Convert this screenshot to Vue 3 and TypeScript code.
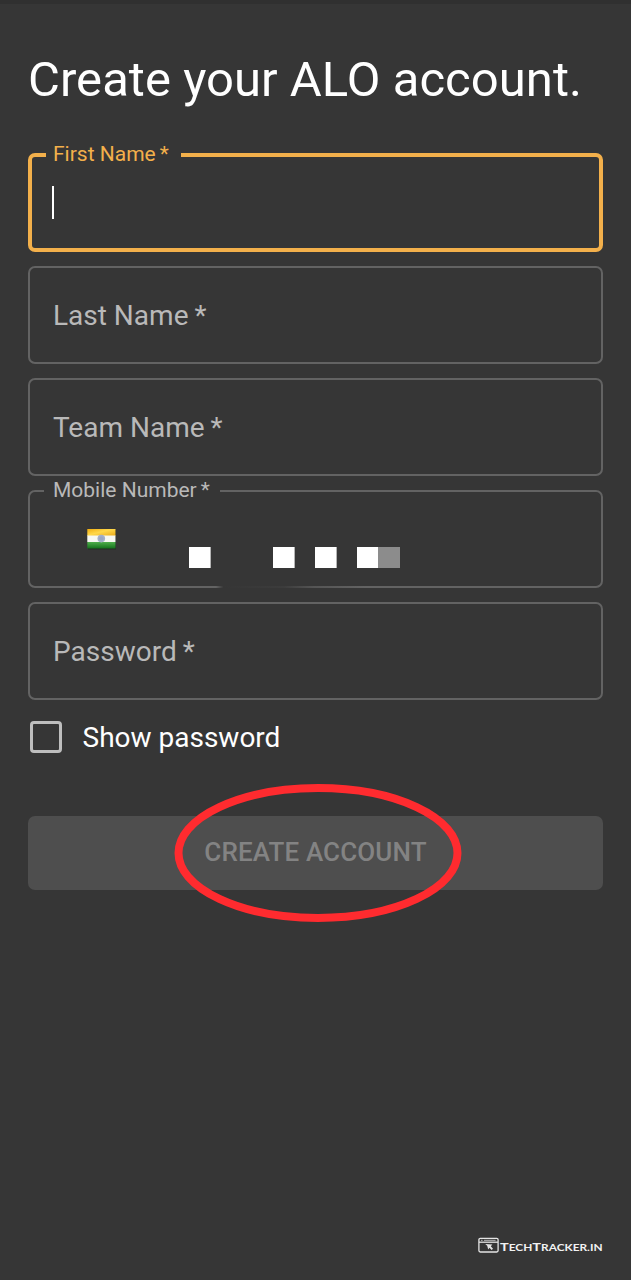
<script setup lang="ts">
import { ref } from 'vue'

interface Field {
  id: string
  label: string
  floating: boolean
  kind: 'text' | 'phone'
}

const fields: Field[] = [
  { id: 'first', label: 'First Name', floating: true, kind: 'text' },
  { id: 'last', label: 'Last Name', floating: false, kind: 'text' },
  { id: 'team', label: 'Team Name', floating: false, kind: 'text' },
  { id: 'mobile', label: 'Mobile Number', floating: true, kind: 'phone' },
  { id: 'password', label: 'Password', floating: false, kind: 'text' },
]

const focused = ref('first')

// Mosaic cells that hide the phone number
const mosaic: string[] = ['white', '', '', '', 'white', '', 'white', '', 'white', 'grey']
</script>

<template>
  <main class="page">
    <h1 class="title">Create your ALO account.</h1>

    <form class="form" @submit.prevent>
      <div
        v-for="field in fields"
        :key="field.id"
        class="field"
        :class="[field.id, { focused: focused === field.id }]"
      >
        <label class="label" :class="{ floating: field.floating }">{{ field.label }}<span class="star">*</span></label>
        <span v-if="focused === field.id" class="caret"></span>
        <div v-if="field.kind === 'phone'" class="phone">
          <svg class="flag" width="30" height="21" viewBox="0 0 30 21">
            <defs>
              <linearGradient id="saffron" x1="0" y1="0" x2="1" y2="1">
                <stop offset="0" stop-color="#f2ae10" />
                <stop offset="0.45" stop-color="#ffd84a" />
                <stop offset="1" stop-color="#e9a817" />
              </linearGradient>
              <linearGradient id="green" x1="0" y1="0" x2="0" y2="1">
                <stop offset="0" stop-color="#4fae4b" />
                <stop offset="1" stop-color="#14721c" />
              </linearGradient>
            </defs>
            <rect x="1" y="1" width="28" height="19.5" fill="#252b25" />
            <rect x="0.3" y="0" width="28.2" height="7" fill="url(#saffron)" />
            <rect x="0.3" y="6.5" width="28.2" height="6.5" fill="#f7f8f2" />
            <rect x="0.3" y="13" width="28.2" height="6.5" fill="url(#green)" />
            <circle cx="14.3" cy="9.6" r="3.8" fill="#a3afc8" />
            <circle cx="14.3" cy="9.6" r="2.2" fill="#98a6c4" />
          </svg>
          <div class="mosaic">
            <span v-for="(cell, i) in mosaic" :key="i" class="cell" :class="cell"></span>
          </div>
          <span class="smudge"></span>
        </div>
      </div>

      <div class="check-row">
        <span class="checkbox"></span>
        <span class="check-label">Show password</span>
      </div>

      <div class="submit">
        <button class="button" type="submit" disabled>CREATE ACCOUNT</button>
        <svg class="ring" width="288" height="138" viewBox="0 0 288 138">
          <ellipse cx="144" cy="69" rx="139.5" ry="65" fill="none" stroke="#ff2b2f" stroke-width="8" />
        </svg>
      </div>
    </form>

    <footer class="brand">
      <svg width="126" height="20" viewBox="0 0 126 20">
        <rect x="1.9" y="2.4" width="19.2" height="13.6" rx="1.4" fill="none" stroke="#e4e4e4" stroke-width="1.3" />
        <path d="M2 6.2H21" stroke="#e4e4e4" stroke-width="1.3" />
        <path d="M4 4.3H5.6M7 4.3H18.6" stroke="#c8c8c8" stroke-width="0.9" />
        <path d="M8.2 8L15.4 8.6L13.8 10.2L16 12.8L14.6 14L12.5 11.8L11.2 13.6L10.2 9.8Z" fill="#e4e4e4" />
        <text class="wordmark" x="23" y="15" textLength="102.6" lengthAdjust="spacingAndGlyphs">T<tspan class="small">ECH</tspan>T<tspan class="small">RACKER.IN</tspan></text>
      </svg>
    </footer>
  </main>
</template>

<style>
body {
  margin: 0;
  background: #363636;
}
</style>

<style scoped>
.page {
  box-sizing: border-box;
  display: flex;
  flex-direction: column;
  height: 1280px;
  padding: 46px 28px 24px;
  border-top: 4px solid #303030;
  background: #363636;
  color: #fff;
  font-family: Roboto, "Liberation Sans", sans-serif;
}

.title {
  margin: 0 0 43px;
  font-size: 49px;
  font-weight: 400;
  line-height: 60px;
  letter-spacing: 0.04px;
  white-space: nowrap;
}

.form {
  display: flex;
  flex-direction: column;
}

.field {
  position: relative;
  box-sizing: border-box;
  display: flex;
  align-items: center;
  height: 98px;
  margin-bottom: 14px;
  padding-left: 23px;
  border: 2px solid #636363;
  border-radius: 7px;
}

.field.first {
  height: 99px;
}

.field.focused {
  padding-left: 20px;
  border: 4px solid #f3b04b;
}

.label {
  padding-top: 1px;
  color: #b9b9b9;
  font-size: 28px;
  line-height: 36px;
  white-space: nowrap;
}

.password .label {
  padding-top: 2px;
}

.star {
  margin-left: 6px;
}

.label.floating {
  position: absolute;
  top: -15px;
  left: 14px;
  padding: 0 10px 0 9px;
  background: #363636;
  font-size: 21px;
  line-height: 26px;
}

.label.floating .star {
  margin-left: 4px;
}

.focused .label.floating {
  top: -16px;
  left: 14px;
  padding: 0 12px 0 7px;
  color: #f3b04b;
}

.caret {
  width: 2px;
  height: 33px;
  background: #fff;
}

.phone {
  display: flex;
  align-items: flex-start;
  align-self: flex-start;
  padding: 37px 0 0 34px;
}

.flag {
  display: block;
}

.mosaic {
  display: flex;
  margin: 18px 0 0 72px;
}

.cell {
  width: 21px;
  height: 21px;
}

.cell.white {
  background: #fff;
  box-shadow: 1px 0 #b4b4b4;
}

.cell.grey {
  background: #8c8c8c;
  box-shadow: 1px 0 #8c8c8c;
}

/* Blurred stretch of the border under the hidden number */
.smudge {
  position: absolute;
  left: 186px;
  bottom: -2px;
  width: 150px;
  height: 2px;
  background: linear-gradient(90deg, #36363600, #363636 5%, #3c3c3c 45%, #48484888 65%, #63636300);
}

.check-row {
  display: flex;
  align-items: center;
  height: 42px;
  margin-top: 2px;
  padding-left: 2px;
}

.checkbox {
  box-sizing: border-box;
  width: 32px;
  height: 32px;
  border: 3px solid #bebebe;
  border-radius: 4px;
}

.check-label {
  margin-left: 20.5px;
  padding-top: 2px;
  font-size: 28px;
  line-height: 40px;
}

.submit {
  position: relative;
  margin-top: 58px;
}

.button {
  display: block;
  width: 100%;
  height: 74px;
  padding: 0 0 2px;
  border: 0;
  border-radius: 7px;
  background: #4e4e4e;
  color: #838383;
  font-family: inherit;
  font-size: 26px;
  font-weight: 500;
  letter-spacing: 0.13px;
}

.ring {
  position: absolute;
  top: -32px;
  left: 146px;
}

.brand {
  display: flex;
  justify-content: flex-end;
  margin-top: auto;
}

.wordmark {
  fill: #f2f2f2;
  font-family: Lato, sans-serif;
  font-size: 11px;
  font-weight: 700;
}

.small {
  font-size: 9px;
}
</style>
